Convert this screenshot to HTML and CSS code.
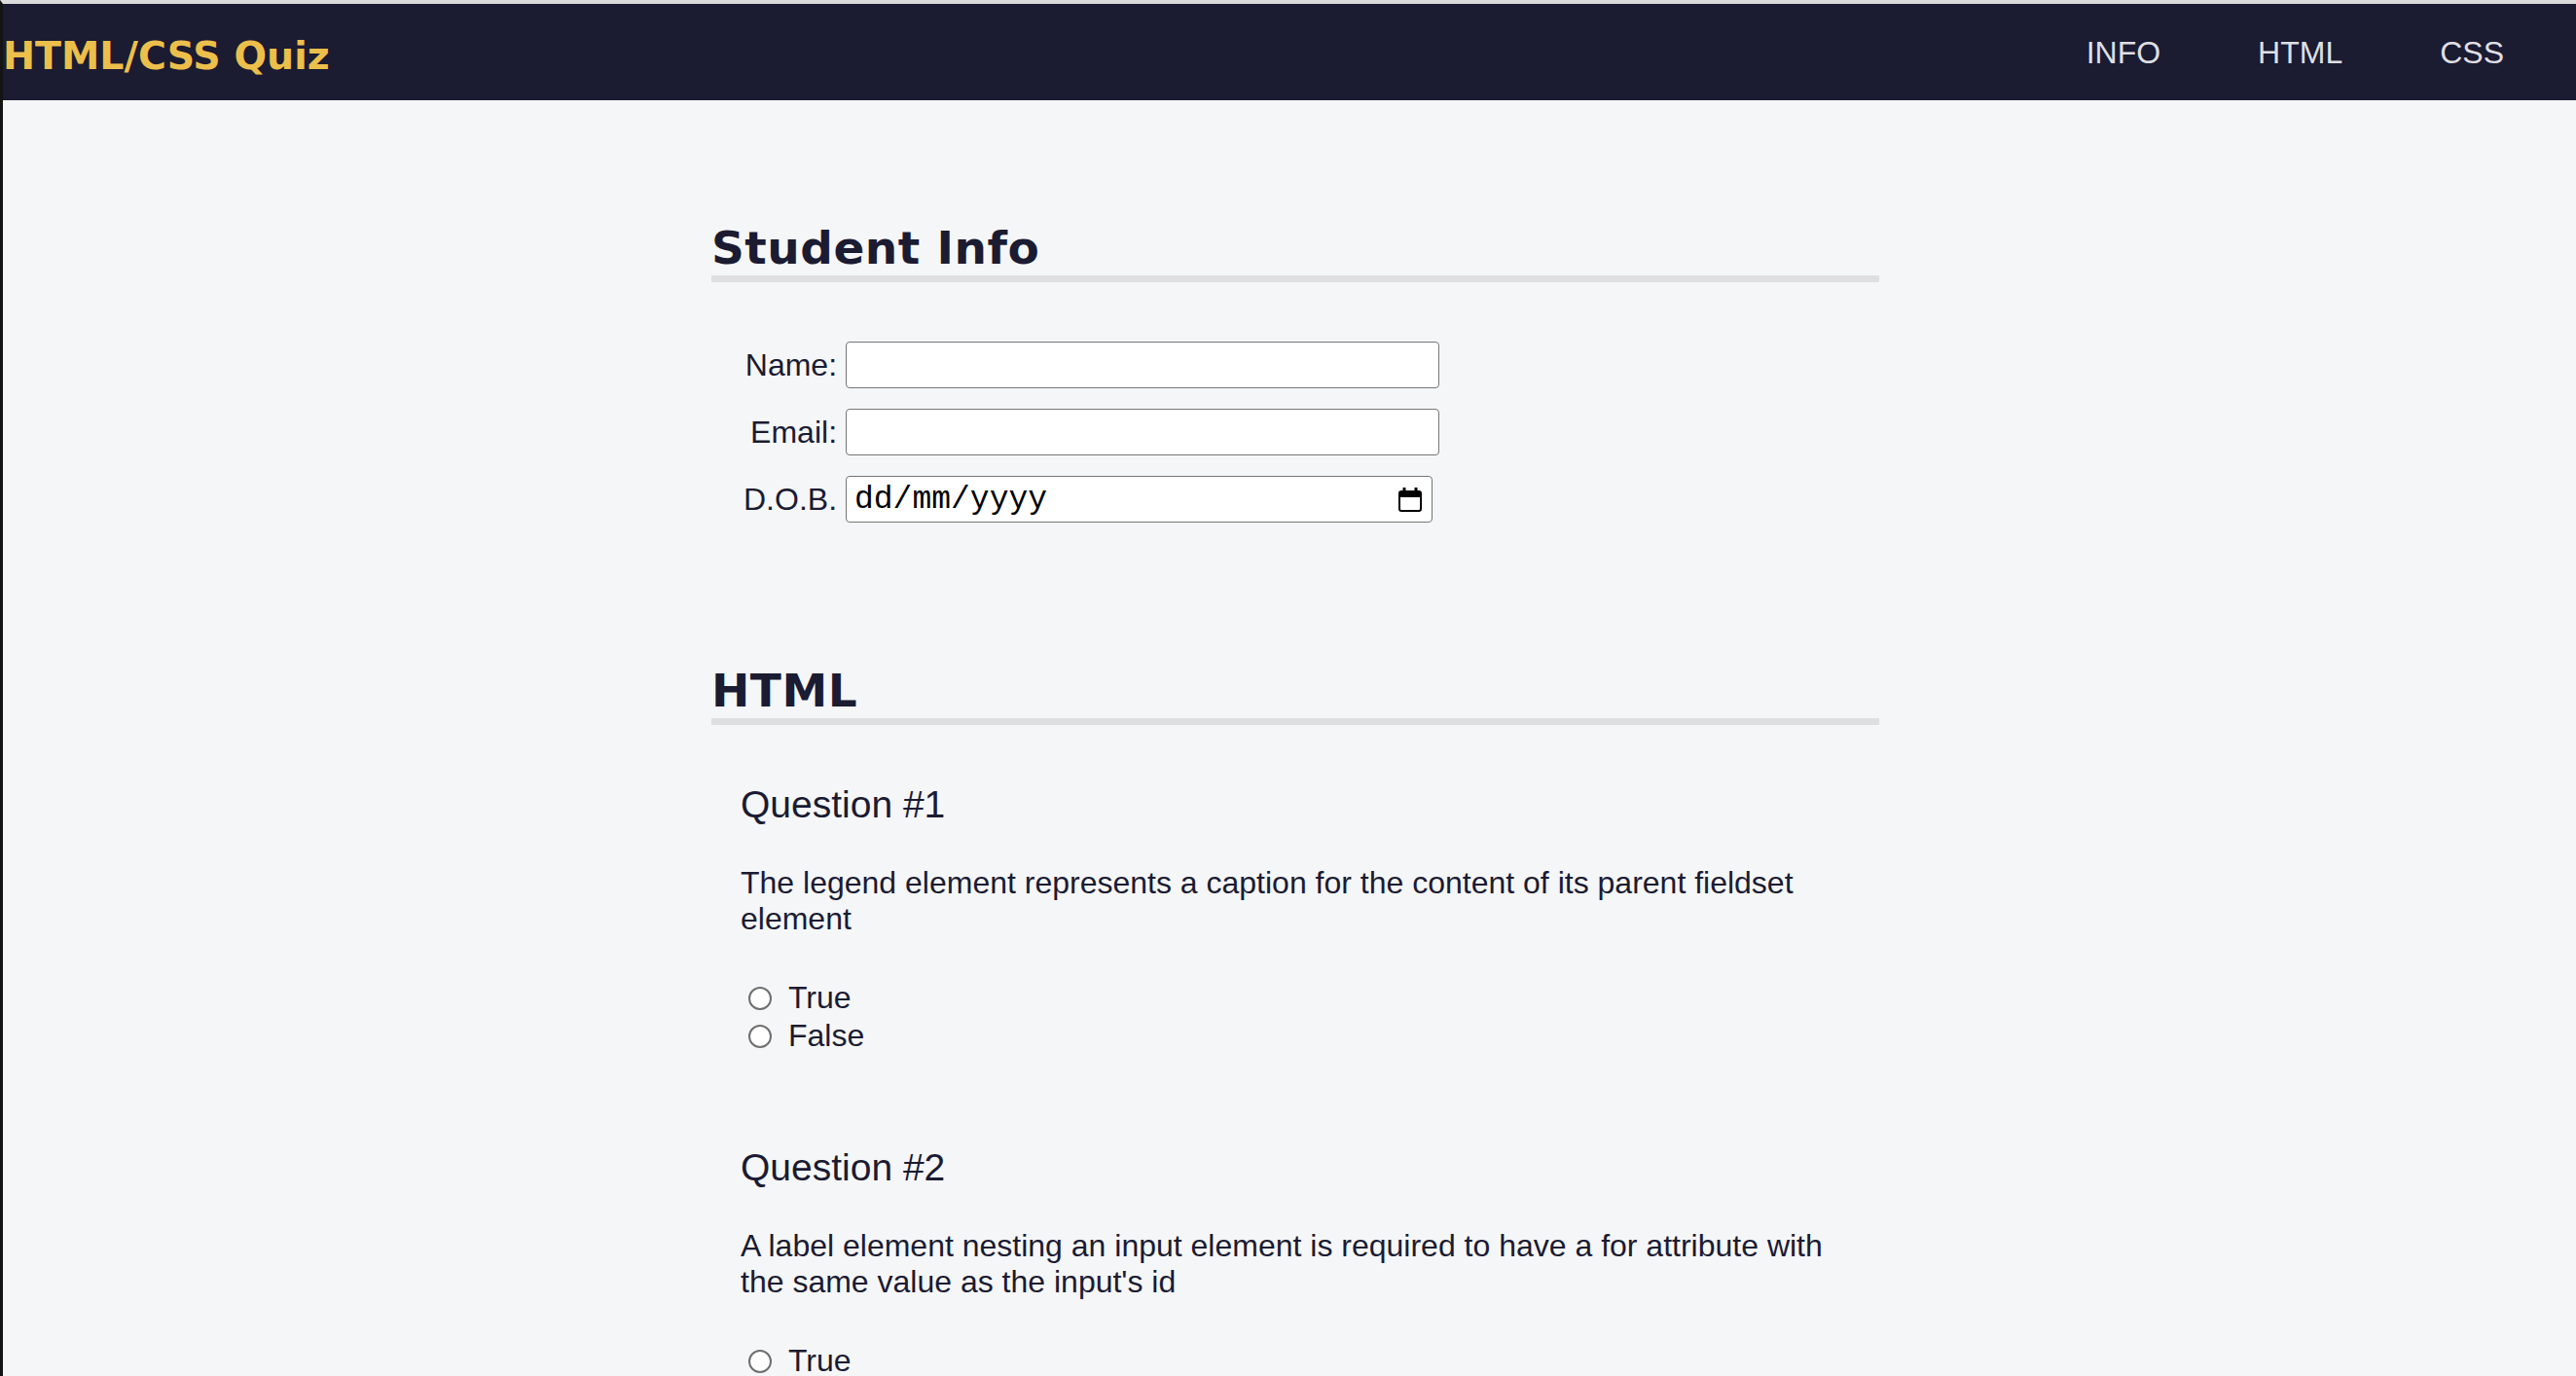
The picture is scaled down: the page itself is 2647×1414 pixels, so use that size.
FILE: index.html
```html
<!DOCTYPE html>
<html lang="en">
<head>
<meta charset="utf-8">
<title>HTML/CSS Quiz</title>
<link rel="stylesheet" href="styles.css">
</head>
<body>
<header class="topbar">
  <span class="brand">HTML/CSS Quiz</span>
  <nav class="nav">
    <a class="nav-link" href="#info">INFO</a>
    <a class="nav-link" href="#html">HTML</a>
    <a class="nav-link" href="#css">CSS</a>
  </nav>
</header>
<main class="quiz">
  <section class="section" id="info">
    <h2 class="section-title">Student Info</h2>
    <div class="info-grid">
      <label class="info-label" for="name">Name:</label>
      <input class="info-input" id="name" type="text">
      <label class="info-label" for="email">Email:</label>
      <input class="info-input" id="email" type="email">
      <label class="info-label" for="dob">D.O.B.</label>
      <div class="date-box">
        <input class="date-input" id="dob" type="text" placeholder="dd/mm/yyyy">
        <svg class="date-icon" width="26" height="27" viewBox="0 0 26 27" aria-hidden="true">
          <rect x="2" y="5" width="22" height="20" rx="2" fill="none" stroke="#000" stroke-width="2"/>
          <rect x="2" y="5" width="22" height="6" fill="#000"/>
          <rect x="5.5" y="1" width="3" height="5" fill="#000"/>
          <rect x="17.5" y="1" width="3" height="5" fill="#000"/>
        </svg>
      </div>
    </div>
  </section>

  <section class="section section-next" id="html">
    <h2 class="section-title">HTML</h2>
    <div class="question">
      <h3 class="question-title">Question #1</h3>
      <p class="question-text">The legend element represents a caption for the content of its parent fieldset element</p>
      <ul class="options">
        <li><label class="option"><input class="radio" type="radio" name="q1" value="true">True</label></li>
        <li><label class="option"><input class="radio" type="radio" name="q1" value="false">False</label></li>
      </ul>
    </div>
    <div class="question question-next">
      <h3 class="question-title">Question #2</h3>
      <p class="question-text">A label element nesting an input element is required to have a for attribute with the same value as the input's id</p>
      <ul class="options">
        <li><label class="option"><input class="radio" type="radio" name="q2" value="true">True</label></li>
        <li><label class="option"><input class="radio" type="radio" name="q2" value="false">False</label></li>
      </ul>
    </div>
  </section>

  <section class="section section-next" id="css">
    <h2 class="section-title">CSS</h2>
  </section>
</main>
</body>
</html>
```

FILE: styles.css
```css
html, body {
  margin: 0;
  padding: 0;
}

body {
  background: #f5f6f8;
  color: #1b1b32;
  font-family: "Liberation Sans", Arial, sans-serif;
  border-top: 4px solid #dcdcdc;
  border-left: 3px solid #141414;
  min-height: 1500px;
}

.topbar {
  height: 99px;
  background: #1b1b32;
  display: flex;
  align-items: center;
  justify-content: space-between;
  padding-right: 24px;
}

.brand {
  font-family: "DejaVu Sans", Verdana, sans-serif;
  font-weight: bold;
  font-size: 39.5px;
  color: #ecbf4b;
  margin-top: 6px;
}

.nav {
  display: flex;
  margin-top: 2px;
}

.nav-link {
  font-family: "Liberation Sans", Arial, sans-serif;
  font-size: 32px;
  color: #dfdfe2;
  text-decoration: none;
  padding: 0 50px;
}

.quiz {
  width: 1200px;
  margin-left: calc(50% - 594px);
  padding-top: 122px;
}

.section-title {
  margin: 0;
  font-family: "DejaVu Sans", Verdana, sans-serif;
  font-weight: bold;
  font-size: 47px;
  letter-spacing: 0.5px;
  line-height: 52px;
  padding-top: 4px;
  padding-bottom: 2px;
  border-bottom: 7px solid #dfdfe2;
  color: #1b1b32;
}

.section-next {
  margin-top: 143px;
}

.info-grid {
  display: grid;
  grid-template-columns: max-content max-content;
  column-gap: 9px;
  row-gap: 21px;
  align-items: center;
  margin-top: 61px;
  padding-left: 33px;
}

.info-label {
  justify-self: end;
  font-size: 32px;
  color: #1b1b32;
}

.info-input {
  box-sizing: border-box;
  width: 610px;
  height: 48px;
  margin: 0;
  background: #ffffff;
  border: 1px solid #767676;
  border-radius: 4px;
  font-size: 28px;
  padding: 0 8px;
}

.date-box {
  box-sizing: border-box;
  width: 603px;
  height: 48px;
  background: #ffffff;
  border: 1px solid #767676;
  border-radius: 4px;
  display: flex;
  align-items: center;
  padding: 0 9px 0 8px;
}

.date-input {
  flex: 1;
  min-width: 0;
  border: none;
  outline: none;
  background: transparent;
  padding: 0;
  margin: 0;
  font-family: "Liberation Mono", "DejaVu Sans Mono", monospace;
  font-size: 33px;
  color: #000000;
}

.date-input::placeholder {
  color: #000000;
  opacity: 1;
}

.date-icon {
  flex: none;
  display: block;
}

.question {
  padding: 0 30px;
  margin-top: 59px;
}

.question-next {
  margin-top: 93px;
}

.question-title {
  margin: 0;
  font-size: 39px;
  font-weight: normal;
  line-height: 45px;
}

.question-text {
  margin: 40px 0 43px;
  font-size: 32px;
  line-height: 37px;
}

.options {
  list-style: none;
  margin: 0;
  padding: 0;
}

.option {
  display: flex;
  align-items: center;
  height: 39px;
  font-size: 32px;
}

.radio {
  appearance: none;
  -webkit-appearance: none;
  box-sizing: border-box;
  width: 24px;
  height: 24px;
  margin: 0 17px 0 8px;
  border: 2px solid #6f6f6f;
  border-radius: 50%;
  background: #ffffff;
}
```
